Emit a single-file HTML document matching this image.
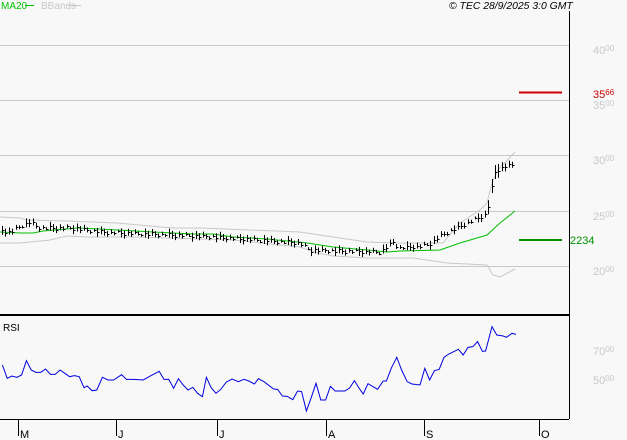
<!DOCTYPE html>
<html><head><style>
html,body{margin:0;padding:0;background:#f8f8f8;width:627px;height:440px;overflow:hidden}
svg{display:block}
text{font-family:"Liberation Sans",sans-serif}
</style></head><body>
<svg id="s" width="627" height="440" viewBox="0 0 627 440">
<rect width="627" height="440" fill="#f8f8f8"/>
<g stroke="#c8c8c8" stroke-width="1">
<line x1="0" y1="45.5" x2="569" y2="45.5"/>
<line x1="0" y1="100.5" x2="569" y2="100.5"/>
<line x1="0" y1="155.5" x2="569" y2="155.5"/>
<line x1="0" y1="211.5" x2="569" y2="211.5"/>
<line x1="0" y1="266.5" x2="569" y2="266.5"/>
</g>
<line x1="569.5" y1="11" x2="569.5" y2="419" stroke="#000"/>
<line x1="0" y1="315" x2="569" y2="315" stroke="#000" stroke-width="2"/>
<line x1="0" y1="419.5" x2="569" y2="419.5" stroke="#000"/>
<g font-size="10" fill="#000">
<text x="1" y="9" fill="#00c000">MA20</text>
<line x1="25" y1="5.5" x2="34" y2="5.5" stroke="#00c000"/>
<text x="41" y="9" fill="#c8c8c8">BBands</text>
<line x1="68" y1="5.5" x2="81" y2="5.5" stroke="#c8c8c8"/>
<text x="449" y="9" font-size="10.4" font-style="italic">© TEC 28/9/2025 3:0 GMT</text>
</g>
<g fill="#c8c8c8" font-size="11">
<text x="593" y="54">40<tspan font-size="8" dy="-3">00</tspan></text>
<text x="593" y="109">35<tspan font-size="8" dy="-3">00</tspan></text>
<text x="593" y="164">30<tspan font-size="8" dy="-3">00</tspan></text>
<text x="593" y="220">25<tspan font-size="8" dy="-3">00</tspan></text>
<text x="593" y="275">20<tspan font-size="8" dy="-3">00</tspan></text>
<text x="593" y="355">70<tspan font-size="8" dy="-3">00</tspan></text>
<text x="593" y="384">50<tspan font-size="8" dy="-3">00</tspan></text>
</g>
<line x1="519" y1="92.5" x2="562" y2="92.5" stroke="#cc0000" stroke-width="2"/>
<text x="593" y="98" fill="#cc0000" font-size="11">35<tspan font-size="8" dy="-3">66</tspan></text>
<line x1="519" y1="240" x2="562" y2="240" stroke="#009000" stroke-width="2"/>
<text x="570" y="244" fill="#009000" font-size="11">2234</text>
<g fill="none" stroke-width="1">
<polyline stroke="#c8c8c8" points="0,217 20,218 27,220 67,221 117,223 150,226 173,228 200,228 300,232 333,237 367,242 400,243 443,243 447,238 460,223 480,210 487,203 492,183 498,170 515,152"/>
<polyline stroke="#c8c8c8" points="0,243 20,243 50,240 67,236 87,237 133,237 233,240 300,247 317,253 333,256 367,258 400,258 413,258 447,263 487,265 493,275 500,277 515,269"/>
<polyline stroke="#00c000" points="0,232 20,233 33,233 43,231 77,228 100,229 153,232 193,234 213,234 233,237 267,239 307,243 333,247 367,250 387,252 400,251 440,250 460,243 487,235 500,223 515,211"/>
</g>
<g id="bars" stroke="#000" stroke-width="1"></g>
<text x="3" y="331" font-size="10">RSI</text>
<polyline fill="none" stroke="#0000e0" stroke-width="1" transform="translate(0,300) scale(0.4,0.33333)" vector-effect="non-scaling-stroke" points="6,195 18,235 30,228 42,232 54,225 66,182 78,210 90,217 102,217 114,207 126,223 138,223 150,210 162,220 174,230 186,227 198,230 210,263 218,258 230,272 242,270 256,232 270,240 284,240 304,224 316,238 334,238 358,240 376,228 398,214 410,238 422,238 434,265 446,236 458,255 470,270 482,262 494,280 506,290 516,232 528,263 540,280 552,268 566,246 580,237 596,245 610,238 622,243 636,252 646,236 660,245 684,267 694,268 706,288 718,289 732,299 744,273 754,275 766,333 778,293 790,250 802,300 814,300 826,259 838,273 862,273 874,264 886,242 898,265 908,282 920,251 944,268 958,243 966,243 978,205 992,172 1004,210 1018,245 1030,252 1050,255 1062,205 1074,240 1086,212 1098,208 1110,172 1122,162 1134,155 1146,148 1158,165 1170,142 1182,140 1194,125 1206,154 1214,153 1230,80 1242,105 1258,108 1266,112 1280,100 1290,103"/>
<g stroke="#000">
<line x1="18.5" y1="419" x2="18.5" y2="436"/>
<line x1="116.5" y1="419" x2="116.5" y2="436"/>
<line x1="217.5" y1="419" x2="217.5" y2="436"/>
<line x1="326.5" y1="419" x2="326.5" y2="436"/>
<line x1="424.5" y1="419" x2="424.5" y2="436"/>
<line x1="539.5" y1="419" x2="539.5" y2="436"/>
</g>
<g font-size="11" fill="#000">
<text x="20" y="438">M</text>
<text x="118" y="438">J</text>
<text x="219" y="438">J</text>
<text x="328" y="438">A</text>
<text x="426" y="438">S</text>
<text x="541" y="438">O</text>
</g>
</svg>
<script>
(function(){
var c=[[0,230],[10,232],[25,224],[30,222],[40,228],[75,228],[100,232],[200,236],[260,240],[300,243],[310,250],[380,252],[393,242],[400,248],[420,246],[430,244],[440,236],[460,226],[480,217],[487,214],[490,195],[495,172],[500,168],[515,164]];
function f(x){for(var i=1;i<c.length;i++){if(x<=c[i][0]){var a=c[i-1],b=c[i];return a[1]+(b[1]-a[1])*(x-a[0])/(b[0]-a[0]);}}return 164;}
var g=document.getElementById('bars'),h='',k=0;
for(var x=2;x<=515;x+=3.4){k++;var y=f(x)+((k*7)%5-2)*0.8;var hh=3+((k*13)%7);if(x>488&&x<500)hh=14;var xx=Math.round(x)+0.5;
h+='<line x1="'+xx+'" y1="'+(y-hh/2)+'" x2="'+xx+'" y2="'+(y+hh/2)+'"/><line x1="'+xx+'" y1="'+Math.round(y)+'.5" x2="'+(xx+2)+'" y2="'+Math.round(y)+'.5"/>';}
g.innerHTML=h;})();
</script>
</body></html>
